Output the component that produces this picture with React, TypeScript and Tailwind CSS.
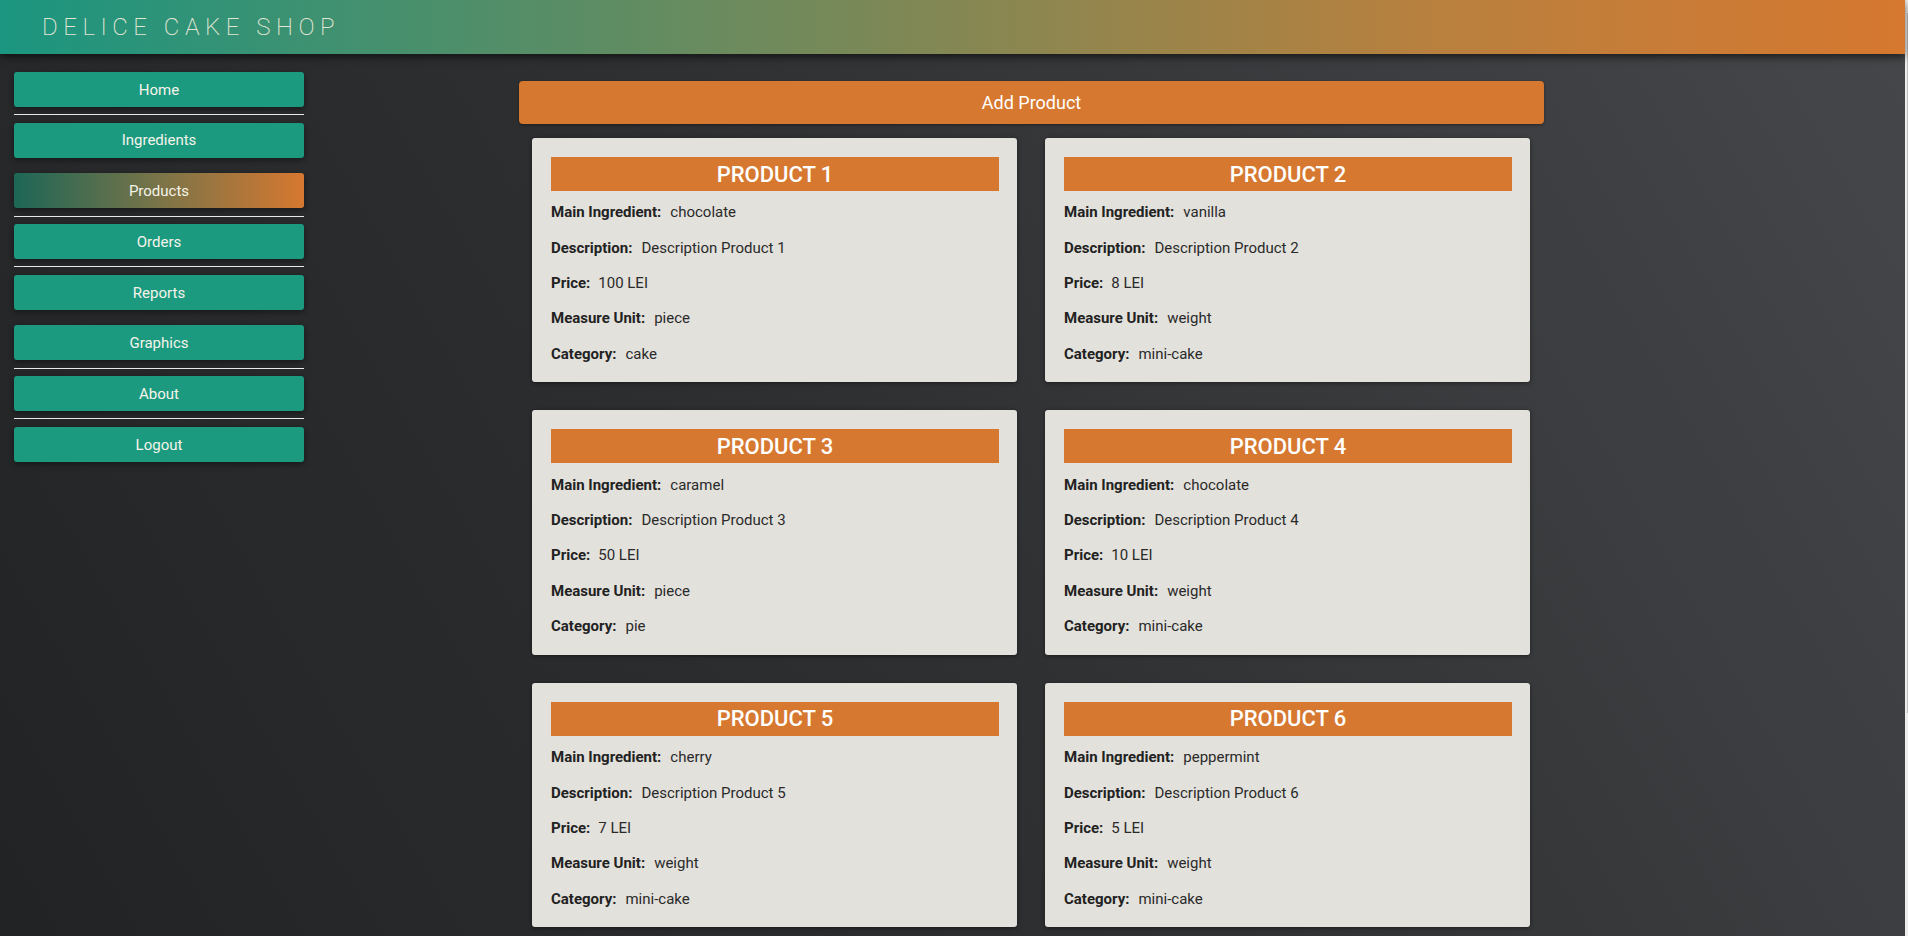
const navItems = [
  { label: "Home", line: true },
  { label: "Ingredients", line: false },
  { label: "Products", line: true, active: true },
  { label: "Orders", line: true },
  { label: "Reports", line: false },
  { label: "Graphics", line: true },
  { label: "About", line: true },
  { label: "Logout", line: false },
];

const products = [
  { name: "PRODUCT 1", ingredient: "chocolate", description: "Description Product 1", price: "100 LEI", unit: "piece", category: "cake" },
  { name: "PRODUCT 2", ingredient: "vanilla", description: "Description Product 2", price: "8 LEI", unit: "weight", category: "mini-cake" },
  { name: "PRODUCT 3", ingredient: "caramel", description: "Description Product 3", price: "50 LEI", unit: "piece", category: "pie" },
  { name: "PRODUCT 4", ingredient: "chocolate", description: "Description Product 4", price: "10 LEI", unit: "weight", category: "mini-cake" },
  { name: "PRODUCT 5", ingredient: "cherry", description: "Description Product 5", price: "7 LEI", unit: "weight", category: "mini-cake" },
  { name: "PRODUCT 6", ingredient: "peppermint", description: "Description Product 6", price: "5 LEI", unit: "weight", category: "mini-cake" },
];

type Product = (typeof products)[number];

const Row = ({ label, value, gap = "mr-[9px]" }: { label: string; value: string; gap?: string }) => (
  <div className="h-[35.3px] flex items-center text-[15px]">
    <span className={`font-bold text-[#222222] ${gap}`}>{label}</span>
    <span className="text-[#2a2a2a]">{value}</span>
  </div>
);

const ProductCard = ({ p }: { p: Product }) => (
  <div className="bg-[#e2e1dc] rounded-[3px] shadow-[0_1px_4px_rgba(0,0,0,0.45)] pt-[19px] pb-[11px] pl-[19px] pr-[18px]">
    <div className="h-[34px] bg-[#d67830] flex items-center justify-center text-white text-[22px] font-medium mb-[4px]">
      {p.name}
    </div>
    <Row label="Main Ingredient:" value={p.ingredient} />
    <Row label="Description:" value={p.description} />
    <Row label="Price:" value={p.price} gap="mr-[8px]" />
    <Row label="Measure Unit:" value={p.unit} />
    <Row label="Category:" value={p.category} />
  </div>
);

const App = () => {
  return (
    <div className="flex min-h-screen font-['Roboto',sans-serif]">
      <div className="flex-1 min-h-screen bg-[linear-gradient(60deg,#222325_0%,#2e2f31_45%,#46474a_100%)]">
        {/* Header */}
        <header className="relative z-10 h-[54px] flex items-center pl-[42px] bg-[linear-gradient(90deg,#1b9680_0%,#6f8a5c_40%,#b8803e_75%,#d67830_100%)] shadow-[0_3px_8px_rgba(0,0,0,0.6)]">
          <h1 className="text-[24px] font-[200] tracking-[0.23em] text-[#e4e6d4]">DELICE CAKE SHOP</h1>
        </header>

        <div className="flex">
          {/* Sidebar */}
          <nav className="w-[290px] ml-[14px] pt-[18px] flex flex-col">
            {navItems.map((item) => (
              <div key={item.label} className="flex flex-col">
                <button
                  className={`h-[35px] pt-px rounded-[3px] text-[15px] text-[#f5f4ea] shadow-[0_2px_6px_rgba(0,0,0,0.45)] ${
                    item.active
                      ? "bg-[linear-gradient(90deg,#1d6656_0%,#7a7448_50%,#d67830_100%)]"
                      : "bg-[#1c9a80]"
                  }`}
                >
                  {item.label}
                </button>
                <div className="h-[15.7px] flex items-center">
                  {item.line && <div className="w-full h-px bg-[#e8e8e8]" />}
                </div>
              </div>
            ))}
          </nav>

          {/* Main */}
          <main className="ml-[215px] w-[1025px] pt-[27px] pb-[10px]">
            <button className="w-full h-[43px] rounded-[4px] bg-[#d67830] text-white text-[18px] shadow-[0_1px_3px_rgba(0,0,0,0.4)]">
              Add Product
            </button>
            <div className="grid grid-cols-2 gap-[28px] pl-[13px] pr-[14px] mt-[14px]">
              {products.map((p) => (
                <ProductCard key={p.name} p={p} />
              ))}
            </div>
          </main>
        </div>
      </div>
      {/* thin scrollbar edge */}
      <div className="w-[3px] bg-[#ededed] flex justify-end pt-[13px]">
        <div className="w-px h-[700px] bg-[#bdbdbd]" />
      </div>
    </div>
  );
};

export default App;
